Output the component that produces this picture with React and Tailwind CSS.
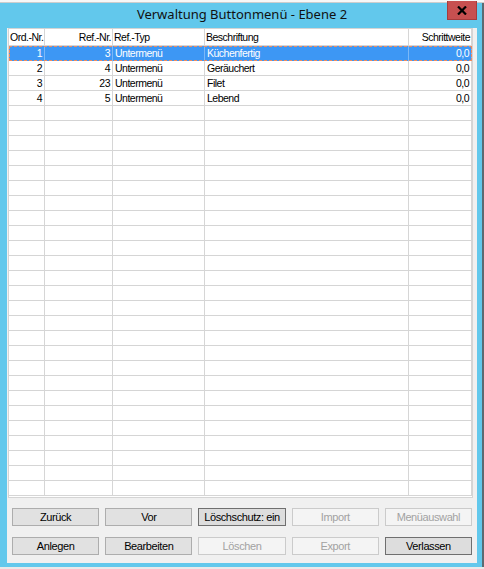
import React from 'react';

const cols = [
  { w: 'w-[36px]', head: 'Ord.-Nr.', headAlign: 'text-left', align: 'text-right' },
  { w: 'w-[68px]', head: 'Ref.-Nr.', headAlign: 'text-right', align: 'text-right' },
  { w: 'w-[92px]', head: 'Ref.-Typ', headAlign: 'text-left', align: 'text-left' },
  { w: 'w-[204px]', head: 'Beschriftung', headAlign: 'text-left', align: 'text-left' },
  { w: 'flex-1', head: 'Schrittweite', headAlign: 'text-right', align: 'text-right' },
];

const rows = [
  ['1', '3', 'Untermenü', 'Küchenfertig', '0,0'],
  ['2', '4', 'Untermenü', 'Geräuchert', '0,0'],
  ['3', '23', 'Untermenü', 'Filet', '0,0'],
  ['4', '5', 'Untermenü', 'Lebend', '0,0'],
];

const emptyRows = Array.from({ length: 26 }, () => ['', '', '', '', '']);

const buttons = [
  { label: 'Zurück' },
  { label: 'Vor' },
  { label: 'Löschschutz: ein', strong: true },
  { label: 'Import', disabled: true },
  { label: 'Menüauswahl', disabled: true },
  { label: 'Anlegen' },
  { label: 'Bearbeiten' },
  { label: 'Löschen', disabled: true },
  { label: 'Export', disabled: true },
  { label: 'Verlassen', strong: true },
];

const font = { fontFamily: '"Liberation Sans", Arial, sans-serif' };

const App = () => {
  return (
    <div className="w-[484px] h-[569px] bg-[#e9e9e9] flex flex-col overflow-hidden">
      <div className="h-[3px] bg-[#f7f7f7] border-b border-[#cdcdcd]"></div>

      {/* Window frame */}
      <div className="relative h-[564px] bg-[#62c8ec] border-r-2 border-[#5b6b72] pl-[7px] pr-[5px] pb-[4px] flex flex-col">
        <div
          className="h-[25px] flex items-center justify-center text-[13px] text-[#111] pb-[1px]"
          style={{ fontFamily: '"Noto Sans", "Open Sans", sans-serif' }}
        >
          Verwaltung Buttonmenü - Ebene 2
        </div>
        <div className="absolute top-[-2px] right-[5px] w-[30px] h-[19px] bg-[#c75050] border border-[#a63c3c] border-t-0 flex items-center justify-center">
          <svg width="10" height="9" viewBox="0 0 10 9">
            <path d="M1 0.5 L9 8.5 M9 0.5 L1 8.5" stroke="#000" strokeWidth="2.2" />
          </svg>
        </div>

        {/* Client area */}
        <div className="flex-1 bg-[#f0f0f0] pl-px pr-[4px] flex flex-col" style={font}>
          <div className="h-[470px] bg-white border border-[#d4d4d4] overflow-hidden text-[10.5px] tracking-[-0.5px] text-black">
            <div className="flex h-[17px] border-b border-[#d6d6d6]">
              {cols.map((c, i) => (
                <div
                  key={i}
                  className={`${c.w} ${c.headAlign} border-r border-[#d6d6d6] px-[1px] leading-[16px] whitespace-nowrap overflow-hidden`}
                >
                  {c.head}
                </div>
              ))}
            </div>
            {rows.concat(emptyRows).map((r, ri) => {
              const sel = ri === 0;
              return (
                <div
                  key={ri}
                  className={`flex h-[15px] ${
                    sel
                      ? 'bg-[#3d97f4] text-white outline outline-1 outline-dashed outline-[#f08a5d] -outline-offset-1'
                      : 'border-b border-[#d5d5d5]'
                  }`}
                >
                  {r.map((v, ci) => (
                    <div
                      key={ci}
                      className={`${cols[ci].w} ${cols[ci].align} border-r ${
                        sel ? 'border-[#7bb8f7]' : 'border-[#d6d6d6]'
                      } px-[2px] leading-[14px] whitespace-nowrap overflow-hidden`}
                    >
                      {v}
                    </div>
                  ))}
                </div>
              );
            })}
          </div>

          <div className="pl-[4px] pr-px pt-[10px] grid grid-cols-5 gap-x-[6px] gap-y-[11px]">
            {buttons.map((b) => (
              <button
                key={b.label}
                className={`h-[18px] text-[11px] tracking-[-0.4px] leading-[16px] border whitespace-nowrap ${
                  b.disabled
                    ? 'bg-[#f4f4f4] border-[#cbcbcb] text-[#a2a2a2]'
                    : b.strong
                    ? 'bg-[#dddddd] border-[#6f6f6f] text-black'
                    : 'bg-[#e1e1e1] border-[#adadad] text-black'
                }`}
                style={font}
              >
                {b.label}
              </button>
            ))}
          </div>
        </div>
      </div>
    </div>
  );
};

export default App;
